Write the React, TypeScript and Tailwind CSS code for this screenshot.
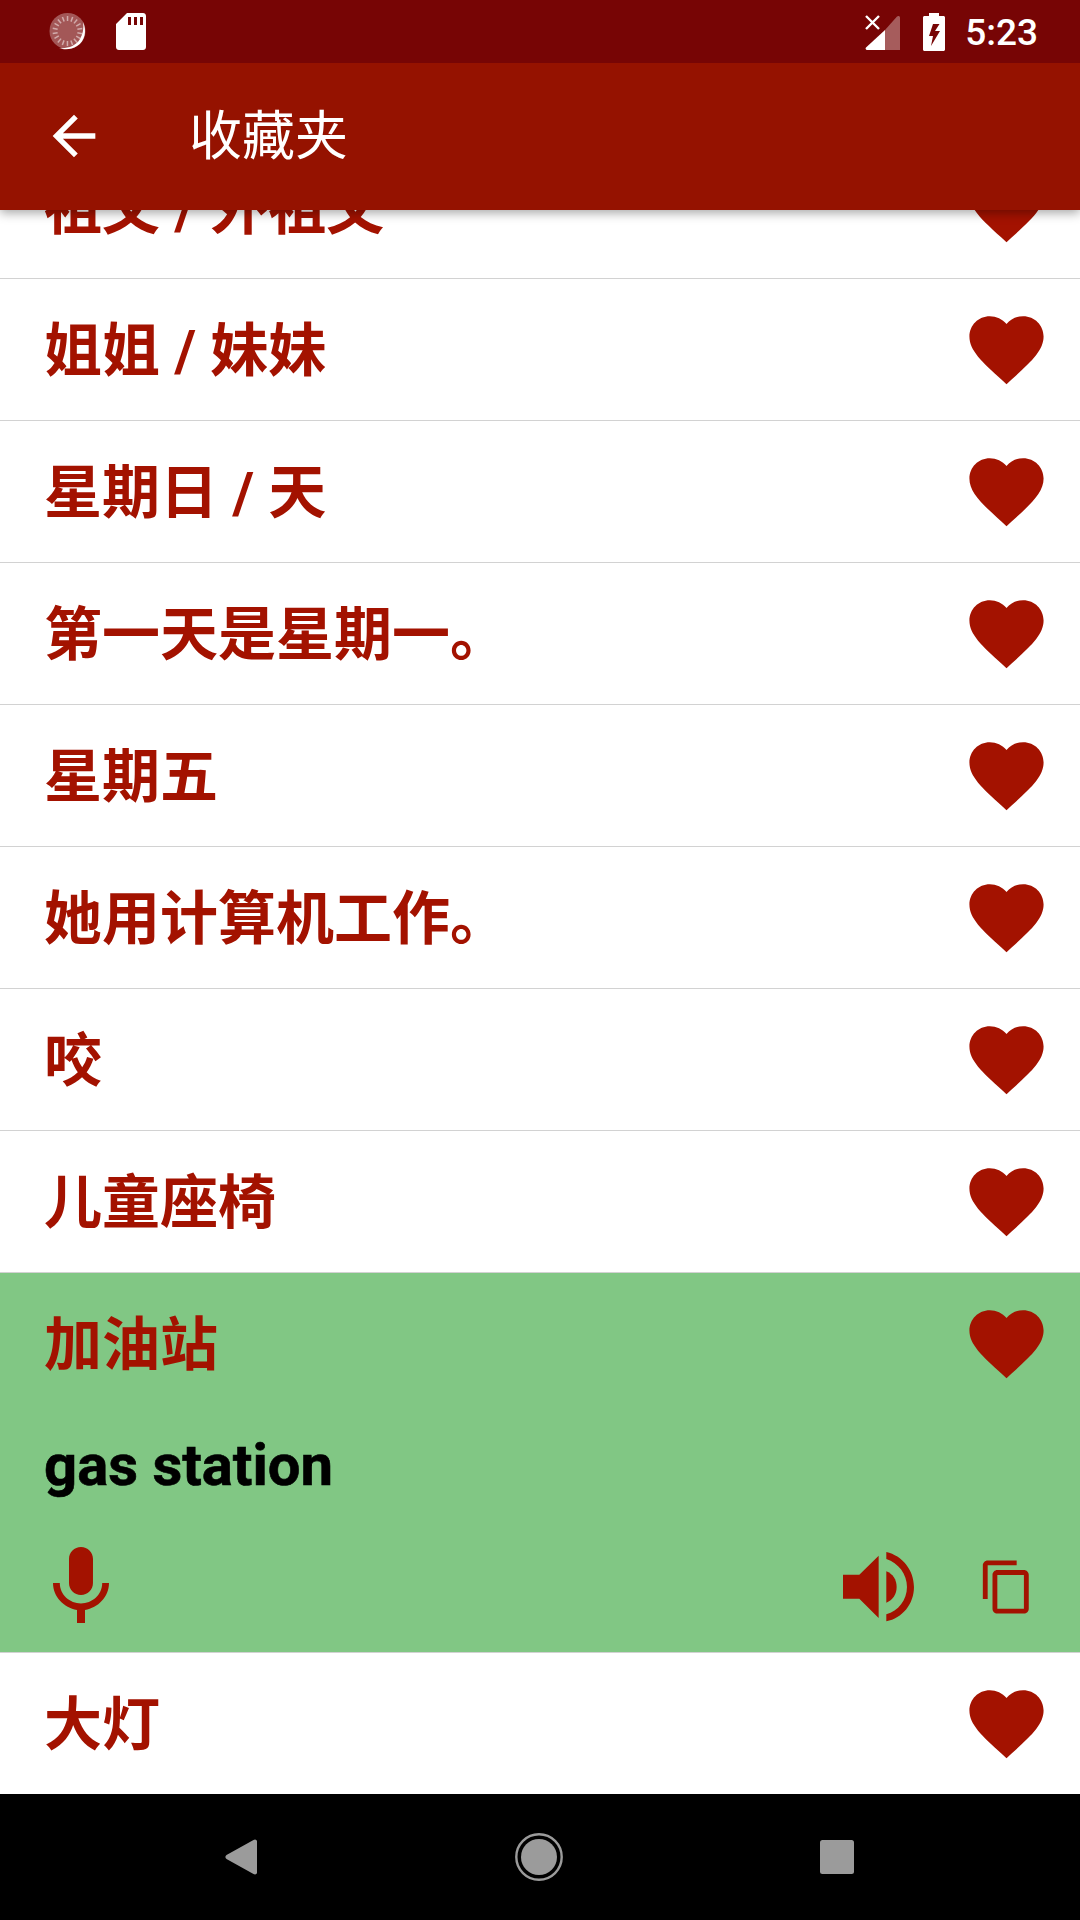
const RED = "#a31200";

function Heart() {
  return (
    <svg width="89" height="89" viewBox="0 0 24 24" className="shrink-0" fill="#a31200">
      <path d="M12 21.35l-1.45-1.32C5.4 15.36 2 12.28 2 8.5 2 5.42 4.42 3 7.5 3c1.74 0 3.41.81 4.5 2.09C13.09 3.81 14.76 3 16.5 3 19.58 3 22 5.42 22 8.5c0 3.78-3.4 6.86-8.55 11.54L12 21.35z" />
    </svg>
  );
}

function Row({ text, green }: { text: string; green?: boolean }) {
  return (
    <div className={green ? "h-[142px] shrink-0 flex items-center justify-between pl-[44px] pr-[29px] pb-[2px]" : "h-[142px] shrink-0 flex items-center justify-between pl-[44px] pr-[29px] border-b border-[#d2d2d2] bg-white"}>
      <span className="pt-[3px] text-[58px] font-bold text-[#a31200] leading-none whitespace-nowrap">{text}</span>
      <Heart />
    </div>
  );
}

function Spinner() {
  const ticks = Array.from({ length: 18 }, (_, i) => (i * 360) / 18);
  return (
    <svg width="38" height="37" viewBox="0 0 38 37">
      <circle cx="18.5" cy="18" r="18" fill="#ffffff" fillOpacity="0.33" />
      <path d="M34 9C38 18 36 28 28 33C22 37 15 37 10 35C18 36 27 33 31 26C34 21 35 15 34 9Z" fill="#ffffff" />
      {ticks.map((a) => (
        <rect key={a} x="17.8" y="3" width="1.5" height="5" fill="#ffffff" fillOpacity="0.5" transform={`rotate(${a} 18.5 18)`} />
      ))}
    </svg>
  );
}

export default function App() {
  const rows = ["祖父 / 外祖父", "姐姐 / 妹妹", "星期日 / 天", "第一天是星期一。", "星期五", "她用计算机工作。", "咬", "儿童座椅"];
  return (
    <div className="w-[1080px] h-[1920px] flex flex-col overflow-hidden bg-white font-['Roboto','Noto_Sans_CJK_SC',sans-serif]">
      <div className="h-[63px] shrink-0 bg-[#770505] flex items-center pl-[49px] pr-[42px] relative z-20">
        <Spinner />
        <svg width="30" height="37" viewBox="0 0 30 37" className="ml-[29px]">
          <path fillRule="evenodd" d="M11 0H27C28.7 0 30 1.3 30 3V34C30 35.7 28.7 37 27 37H3C1.3 37 0 35.7 0 34V11ZM12 4V12H15V4ZM18 4V12H21V4ZM24 4V12H27V4Z" fill="#ffffff" />
        </svg>
        <div className="flex-1" />
        <svg width="36" height="36" viewBox="0 0 36 36" className="mt-[2px]">
          <path d="M20 15L32 1.5C33.2 .3 35 1 35 2.5V35H20Z" fill="#ffffff" fillOpacity="0.35" />
          <path d="M20 15V35H2C0.8 35 0 33.6 1 32.6Z" fill="#ffffff" />
          <path d="M1 1L14 14M14 1L1 14" stroke="#ffffff" strokeWidth="2.4" />
        </svg>
        <svg width="22" height="38" viewBox="0 0 22 38" className="ml-[22px]">
          <path fillRule="evenodd" d="M6 0H16V3H20.5C21.3 3 22 3.7 22 4.5V36.5C22 37.3 21.3 38 20.5 38H1.5C.7 38 0 37.3 0 36.5V4.5C0 3.7 .7 3 1.5 3H6ZM10 11L6 23H10L8 33L17 18H12L16.5 11Z" fill="#ffffff" />
        </svg>
        <span className="ml-[20px] pt-[2px] text-[37px] font-medium text-white leading-none">5:23</span>
      </div>

      <div className="h-[147px] shrink-0 bg-[#951200] flex items-center pl-[42px] relative z-10 shadow-[0_3px_10px_rgba(0,0,0,0.35)]">
        <svg width="64" height="64" viewBox="0 0 24 24" fill="#ffffff" className="mb-[1px]">
          <path d="M20 11H7.83l5.59-5.59L12 4l-8 8 8 8 1.41-1.41L7.83 13H20v-2z" />
        </svg>
        <span className="ml-[83px] pt-[2px] text-[53px] text-white leading-none">收藏夹</span>
      </div>

      <div className="flex-1 min-h-0 overflow-hidden flex flex-col justify-end">
        {rows.map((r) => (
          <Row key={r} text={r} />
        ))}
        <div className="h-[380px] shrink-0 bg-[#81c784] border-b border-[#d2d2d2] flex flex-col">
          <Row text="加油站" green />
          <div className="pl-[44px] h-[100px] flex items-center">
            <span className="text-[58px] font-bold text-black leading-none [-webkit-text-stroke:0.6px_black]">gas station</span>
          </div>
          <div className="flex items-center pl-[33px] pr-[44px] pt-[24px]">
            <svg width="96" height="96" viewBox="0 0 24 24" fill={RED}>
              <path d="M12 14c1.66 0 2.99-1.34 2.99-3L15 5c0-1.66-1.34-3-3-3S9 3.34 9 5v6c0 1.66 1.34 3 3 3zm5.3-3c0 3-2.54 5.1-5.3 5.1S6.7 14 6.7 11H5c0 3.41 2.72 6.23 6 6.72V21h2v-3.28c3.28-.48 6-3.3 6-6.72h-1.7z" />
            </svg>
            <div className="flex-1" />
            <svg width="71.3" height="69.3" viewBox="189 845 214 208" fill={RED}>
              <path d="M189 913H238L296 856V1043L238 985H189Z" />
              <path d="M319 903C338 910 350 928 350 950C350 972 338 990 319 997Z" />
              <path d="M319 845C367 856 402 899 402 950C402 1001 367 1044 319 1053V1032C355 1022 381 989 381 950C381 911 355 878 319 866Z" />
            </svg>
            <svg width="58" height="58" viewBox="0 0 24 24" fill={RED} className="ml-[64px]">
              <path d="M16 1H4c-1.1 0-2 .9-2 2v14h2V3h12V1zm3 4H8c-1.1 0-2 .9-2 2v14c0 1.1.9 2 2 2h11c1.1 0 2-.9 2-2V7c0-1.1-.9-2-2-2zm0 16H8V7h11v14z" />
            </svg>
          </div>
        </div>
        <div className="h-[141px] shrink-0 flex items-center justify-between pl-[44px] pr-[29px] bg-white">
          <span className="pt-[3px] text-[58px] font-bold text-[#a31200] leading-none">大灯</span>
          <Heart />
        </div>
      </div>

      <div className="h-[126px] shrink-0 bg-black flex items-center pl-[225px]">
        <svg width="32" height="36" viewBox="0 0 32 36">
          <path d="M30 0.5C31 0.5 32 1.3 32 2.5V33.5C32 34.8 31 35.5 30 35.5C29.5 35.5 29 35.3 28.5 35L1.5 20C0 19 0 17 1.5 16L28.5 1C29 .7 29.5 .5 30 .5Z" fill="#9b9b9b" />
        </svg>
        <svg width="48" height="48" viewBox="0 0 48 48" className="ml-[258px]">
          <circle cx="24" cy="24" r="22.7" fill="none" stroke="#9b9b9b" strokeWidth="2.4" />
          <circle cx="24" cy="24" r="18" fill="#9b9b9b" />
        </svg>
        <svg width="34" height="34" viewBox="0 0 34 34" className="ml-[257px]">
          <rect width="34" height="34" rx="2.5" fill="#9b9b9b" />
        </svg>
      </div>
    </div>
  );
}
